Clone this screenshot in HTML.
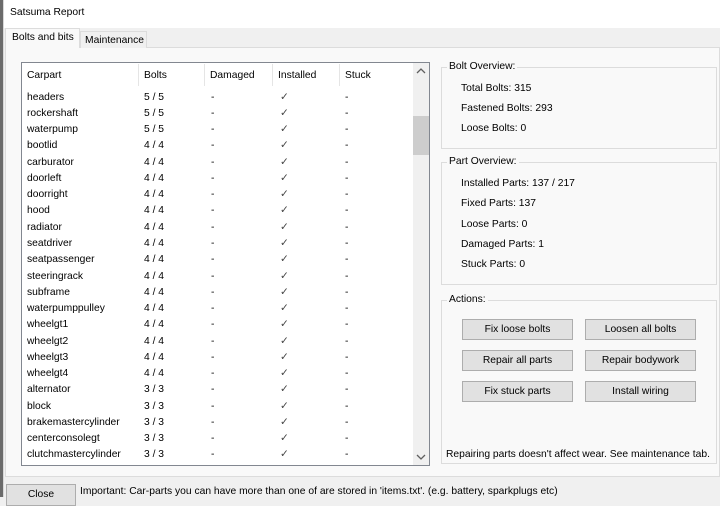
<!DOCTYPE html><html><head><style>
*{margin:0;padding:0;box-sizing:border-box}
body{width:720px;height:497px;background:#f0f0f0;font-family:"Liberation Sans",sans-serif;font-size:10.3px;color:#000;position:relative;overflow:hidden}
.a{position:absolute;white-space:nowrap}
.gb{position:absolute;border:1px solid #dcdcdc}
.gl{position:absolute;background:#f9f9f9;padding:0 2px;top:-7px;left:5px;white-space:nowrap}
.btn{position:absolute;width:111px;height:21px;background:#e1e1e1;border:1px solid #adadad;text-align:center;line-height:19px;white-space:nowrap}
.row{position:absolute;left:27px;width:380px;height:16px;line-height:16px;white-space:nowrap}
.row span{position:absolute;white-space:nowrap}
</style></head><body>
<div class="a" style="left:0;top:0;width:720px;height:28px;background:#fff"></div>
<div class="a" style="left:0;top:0;width:3px;height:497px;background:#6b6b6b"></div>
<div class="a" style="left:3px;top:0;width:1px;height:497px;background:#d8d8d8"></div>
<div class="a" style="left:10px;top:7px">Satsuma Report</div>
<div class="a" style="left:5px;top:47px;width:715px;height:430px;background:#f9f9f9;border:1px solid #dcdcdc"></div>
<div class="a" style="left:5px;top:28px;width:75px;height:20px;background:#f9f9f9;border:1px solid #dcdcdc;border-bottom:none;padding:3px 0 0 6px">Bolts and bits</div>
<div class="a" style="left:80px;top:31px;width:67px;height:17px;background:#f0f0f0;border:1px solid #dcdcdc;border-bottom:none;padding:3px 0 0 4px">Maintenance</div>
<div class="a" style="left:21px;top:62px;width:409px;height:404px;background:#fff;border:1px solid #828790"></div>
<div class="a" style="left:413px;top:63px;width:16px;height:402px;background:#f0f0f0"></div>
<div class="a" style="left:413px;top:116px;width:16px;height:39px;background:#cdcdcd"></div>
<svg class="a" style="left:416px;top:68px" width="10" height="8"><path d="M1 5 L5 1 L9 5" fill="none" stroke="#606060" stroke-width="1.3"/></svg>
<svg class="a" style="left:416px;top:453px" width="10" height="8"><path d="M1 2 L5 6 L9 2" fill="none" stroke="#606060" stroke-width="1.3"/></svg>
<div class="a" style="left:138px;top:64px;width:1px;height:22px;background:#e5e5e5"></div>
<div class="a" style="left:204px;top:64px;width:1px;height:22px;background:#e5e5e5"></div>
<div class="a" style="left:272px;top:64px;width:1px;height:22px;background:#e5e5e5"></div>
<div class="a" style="left:339px;top:64px;width:1px;height:22px;background:#e5e5e5"></div>
<div class="row" style="top:68px"><span style="left:0">Carpart</span><span style="left:117px">Bolts</span><span style="left:183px">Damaged</span><span style="left:251px">Installed</span><span style="left:318px">Stuck</span></div>
<div id="rows"></div>
<script>
var d=[["headers","5 / 5"],["rockershaft","5 / 5"],["waterpump","5 / 5"],["bootlid","4 / 4"],["carburator","4 / 4"],["doorleft","4 / 4"],["doorright","4 / 4"],["hood","4 / 4"],["radiator","4 / 4"],["seatdriver","4 / 4"],["seatpassenger","4 / 4"],["steeringrack","4 / 4"],["subframe","4 / 4"],["waterpumppulley","4 / 4"],["wheelgt1","4 / 4"],["wheelgt2","4 / 4"],["wheelgt3","4 / 4"],["wheelgt4","4 / 4"],["alternator","3 / 3"],["block","3 / 3"],["brakemastercylinder","3 / 3"],["centerconsolegt","3 / 3"],["clutchmastercylinder","3 / 3"]];
var h="";d.forEach(function(r,i){h+='<div class="row" style="top:'+(89.5+i*16.27).toFixed(1)+'px"><span style="left:0">'+r[0]+'</span><span style="left:117px">'+r[1]+'</span><span style="left:184px">-</span><span style="left:253px;color:#444">&#10003;</span><span style="left:318px">-</span></div>';});
document.getElementById("rows").innerHTML=h;
</script>
<div class="gb" style="left:441px;top:67px;width:276px;height:82px"><div class="gl">Bolt Overview:</div></div>
<div class="a" style="left:461px;top:83px">Total Bolts: 315</div>
<div class="a" style="left:461px;top:103px">Fastened Bolts: 293</div>
<div class="a" style="left:461px;top:123px">Loose Bolts: 0</div>
<div class="gb" style="left:441px;top:162px;width:276px;height:123px"><div class="gl">Part Overview:</div></div>
<div class="a" style="left:461px;top:178px">Installed Parts: 137 / 217</div>
<div class="a" style="left:461px;top:198px">Fixed Parts: 137</div>
<div class="a" style="left:461px;top:219px">Loose Parts: 0</div>
<div class="a" style="left:461px;top:239px">Damaged Parts: 1</div>
<div class="a" style="left:461px;top:259px">Stuck Parts: 0</div>
<div class="gb" style="left:441px;top:300px;width:276px;height:164px"><div class="gl">Actions:</div></div>
<div class="btn" style="left:462px;top:319px">Fix loose bolts</div>
<div class="btn" style="left:585px;top:319px">Loosen all bolts</div>
<div class="btn" style="left:462px;top:350px">Repair all parts</div>
<div class="btn" style="left:585px;top:350px">Repair bodywork</div>
<div class="btn" style="left:462px;top:381px">Fix stuck parts</div>
<div class="btn" style="left:585px;top:381px">Install wiring</div>
<div class="a" style="left:446px;top:449px">Repairing parts doesn't affect wear. See maintenance tab.</div>
<div class="btn" style="left:6px;top:484px;width:70px;height:22px">Close</div>
<div class="a" style="left:80px;top:486px">Important: Car-parts you can have more than one of are stored in 'items.txt'. (e.g. battery, sparkplugs etc)</div>
</body></html>
